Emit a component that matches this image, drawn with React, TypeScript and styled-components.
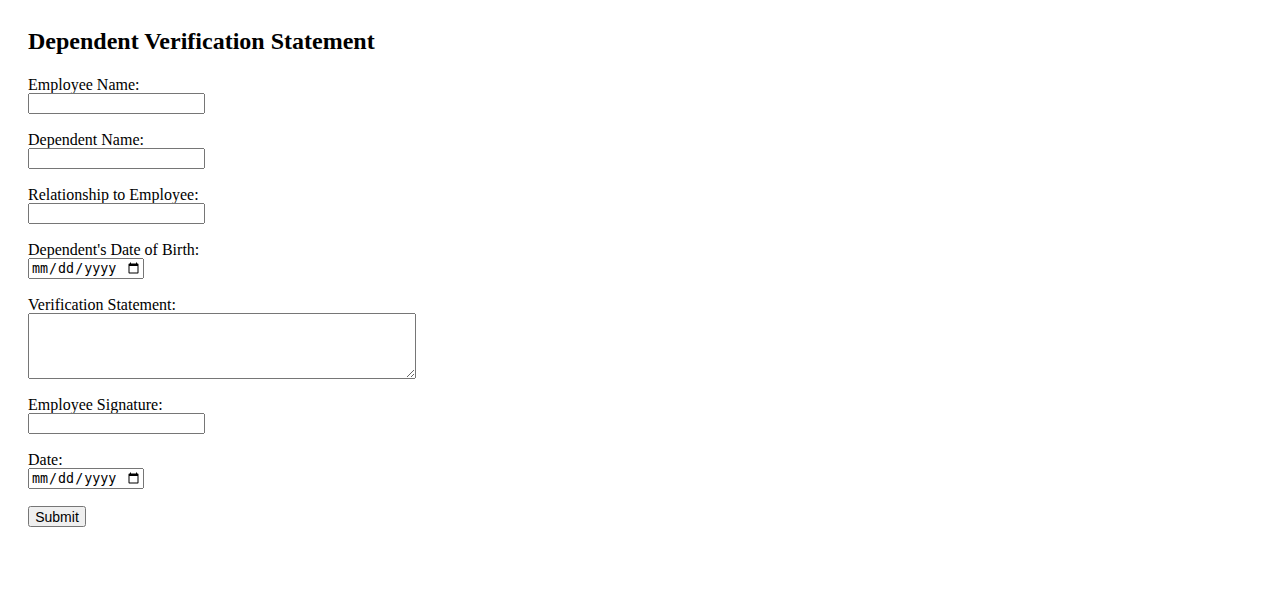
import React from "react";
import styled, { createGlobalStyle } from "styled-components";

const Global = createGlobalStyle`
  html, body { margin: 0; padding: 0; background: #fff; }
  body { font-family: "Liberation Serif", "Times New Roman", serif; font-size: 16px; color: #000; }
`;

const Page = styled.main`
  padding: 28px 28px;
`;

const Title = styled.h2`
  margin: 0 0 21px 0;
  font-size: 24px;
  line-height: 27px;
  font-weight: bold;
`;

const Form = styled.form`
  display: flex;
  flex-direction: column;
  align-items: flex-start;
`;

const Field = styled.div`
  display: flex;
  flex-direction: column;
  align-items: flex-start;
  margin-bottom: 17px;
`;

const Label = styled.label`
  display: block;
  line-height: 18px;
  height: 17px;
`;

const TextInput = styled.input`
  box-sizing: border-box;
  width: 177px;
  height: 21px;
  margin: 0;
`;

const DateInput = styled.input`
  box-sizing: border-box;
  width: 116px;
  height: 21px;
  margin: 0;
`;

const TextArea = styled.textarea`
  box-sizing: border-box;
  width: 388px;
  height: 66px;
  margin: 0;
`;

const Button = styled.button`
  box-sizing: border-box;
  width: 58px;
  height: 21px;
  margin: 0;
  padding: 0;
  font-family: "Liberation Sans", Arial, sans-serif;
  font-size: 14px;
  line-height: 16px;
`;

export default function App() {
  return (
    <>
      <Global />
      <Page>
        <Title>Dependent Verification Statement</Title>
        <Form onSubmit={(e) => e.preventDefault()}>
          <Field>
            <Label htmlFor="en">Employee Name:</Label>
            <TextInput id="en" type="text" />
          </Field>
          <Field>
            <Label htmlFor="dn">Dependent Name:</Label>
            <TextInput id="dn" type="text" />
          </Field>
          <Field>
            <Label htmlFor="rel">Relationship to Employee:</Label>
            <TextInput id="rel" type="text" />
          </Field>
          <Field>
            <Label htmlFor="dob">Dependent's Date of Birth:</Label>
            <DateInput id="dob" type="date" />
          </Field>
          <Field>
            <Label htmlFor="vs">Verification Statement:</Label>
            <TextArea id="vs" />
          </Field>
          <Field>
            <Label htmlFor="sig">Employee Signature:</Label>
            <TextInput id="sig" type="text" />
          </Field>
          <Field>
            <Label htmlFor="date">Date:</Label>
            <DateInput id="date" type="date" />
          </Field>
          <Button type="submit">Submit</Button>
        </Form>
      </Page>
    </>
  );
}
